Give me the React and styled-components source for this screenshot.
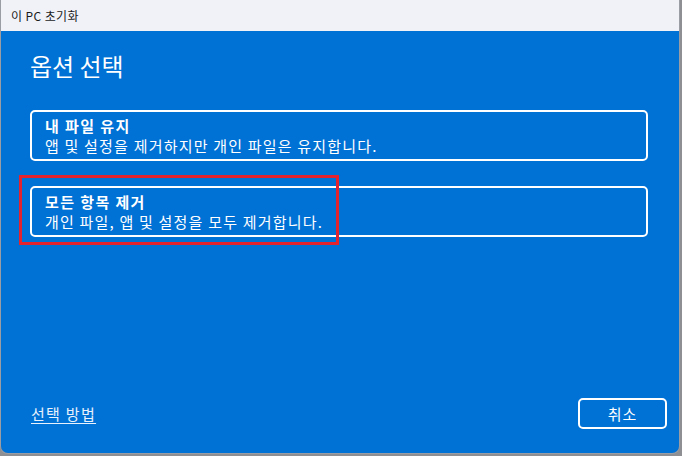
import React from 'react';
import styled, { createGlobalStyle } from 'styled-components';

const GlobalStyle = createGlobalStyle`
  html, body {
    margin: 0;
    padding: 0;
    background: #8d8f93;
  }
  body {
    font-family: "Noto Sans CJK KR", "Noto Sans", sans-serif;
  }
`;

const Window = styled.div`
  position: relative;
  width: 680px;
  height: 454px;
  display: flex;
  flex-direction: column;
  border: 1px solid #9a9da3;
  border-top: 0;
  border-radius: 0 0 8px 8px;
  overflow: hidden;
  box-sizing: border-box;
`;

const TitleBar = styled.div`
  height: 31px;
  flex: none;
  display: flex;
  align-items: center;
  padding-left: 10px;
  background: #f0f2f8;
  color: #1b1b1b;
  font-size: 12px;
  letter-spacing: 0.4px;
`;

const Body = styled.div`
  position: relative;
  flex: 1;
  display: flex;
  flex-direction: column;
  background: #0071d5;
  color: #fff;
  padding: 19px 31px 24px 29px;
`;

const Heading = styled.h1`
  margin: 0 0 28px 0;
  font-size: 24px;
  font-weight: 400;
  line-height: 32px;
`;

const Options = styled.div`
  display: flex;
  flex-direction: column;
  gap: 25px;
`;

const Card = styled.div`
  height: 51px;
  box-sizing: border-box;
  border: 2px solid #fff;
  border-radius: 5px;
  padding: 3px 12px 3px 13px;
  display: flex;
  flex-direction: column;
  justify-content: center;
  cursor: pointer;
`;

const CardTitle = styled.div`
  font-size: 15px;
  font-weight: 700;
  line-height: 20px;
  letter-spacing: 1.4px;
`;

const CardText = styled.div`
  font-size: 15px;
  line-height: 20px;
  letter-spacing: 1.2px;
`;

const Highlight = styled.div`
  position: absolute;
  left: 18px;
  top: 144px;
  width: 320px;
  height: 70px;
  box-sizing: border-box;
  border: 3px solid #e3242f;
  pointer-events: none;
`;

const Footer = styled.div`
  margin-top: auto;
  display: flex;
  align-items: center;
  justify-content: space-between;
`;

const HelpLink = styled.a`
  color: #e8f1fc;
  font-size: 15px;
  letter-spacing: 1.3px;
  text-decoration: underline;
  text-underline-offset: 3px;
  margin-left: 1px;
  cursor: pointer;
`;

const Button = styled.button`
  width: 89px;
  height: 31px;
  margin-right: -19px;
  background: transparent;
  border: 2px solid #fff;
  border-radius: 5px;
  color: #fff;
  font-family: inherit;
  font-size: 15px;
  letter-spacing: 1px;
  cursor: pointer;
`;

const options = [
  { title: '내 파일 유지', text: '앱 및 설정을 제거하지만 개인 파일은 유지합니다.' },
  { title: '모든 항목 제거', text: '개인 파일, 앱 및 설정을 모두 제거합니다.' },
];

export default function App() {
  return (
    <>
      <GlobalStyle />
      <Window>
        <TitleBar>이 PC 초기화</TitleBar>
        <Body>
          <Heading>옵션 선택</Heading>
          <Options>
            {options.map((o) => (
              <Card key={o.title}>
                <CardTitle>{o.title}</CardTitle>
                <CardText>{o.text}</CardText>
              </Card>
            ))}
          </Options>
          <Highlight />
          <Footer>
            <HelpLink>선택 방법</HelpLink>
            <Button>취소</Button>
          </Footer>
        </Body>
      </Window>
    </>
  );
}
